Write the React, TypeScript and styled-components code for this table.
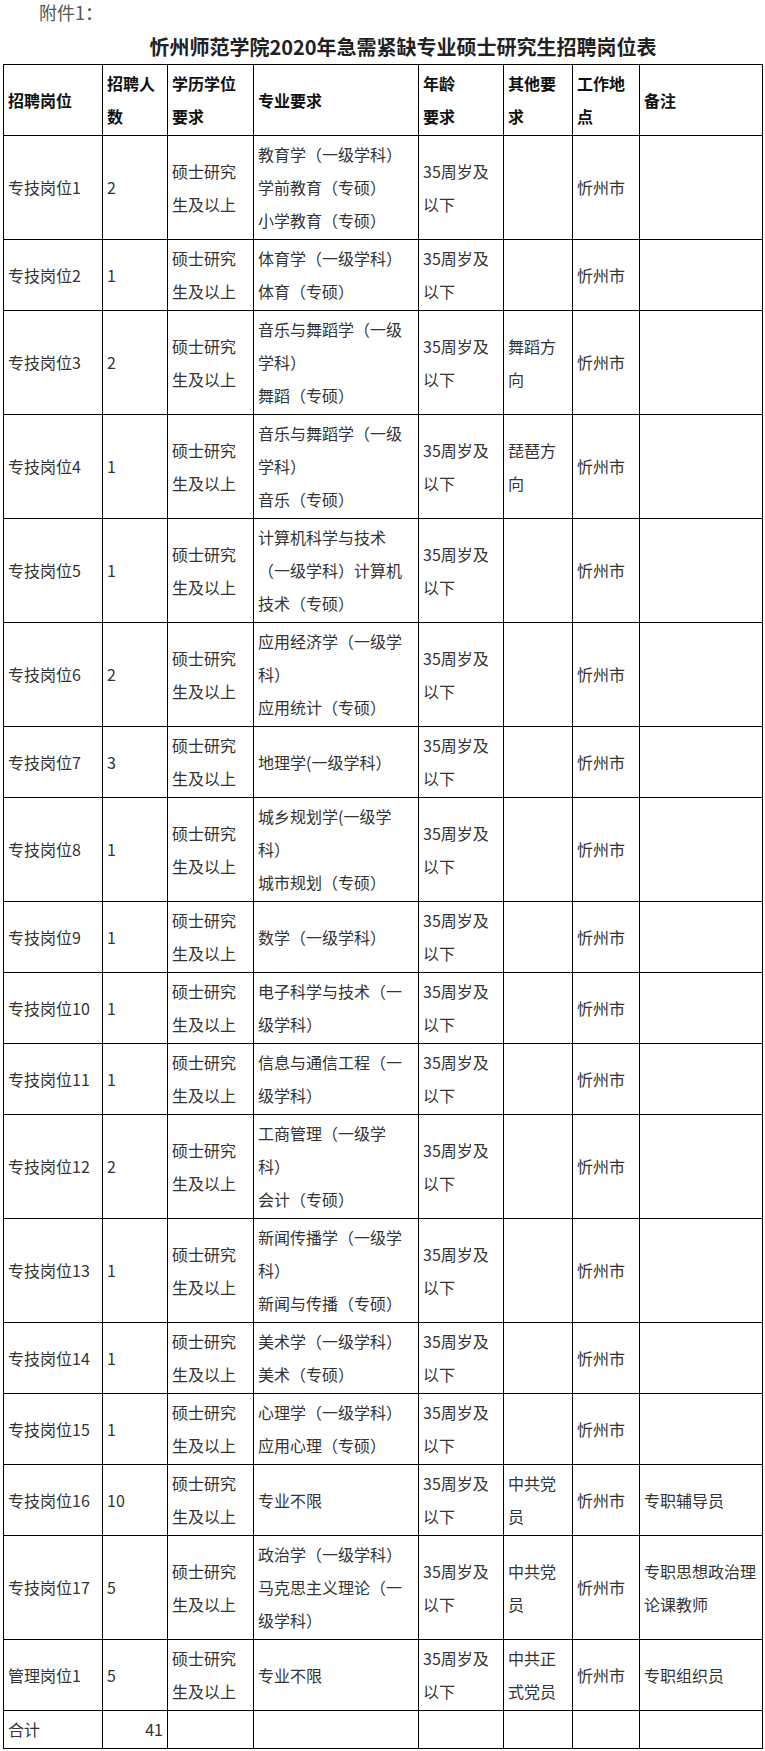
import React from 'react';
import styled, { createGlobalStyle } from 'styled-components';

const GlobalStyle = createGlobalStyle`
    body {
        margin: 0;
        background: #fff;
        font-family: "Noto Sans CJK SC", "Microsoft YaHei", "Liberation Sans", sans-serif;
        text-spacing-trim: space-all;
    }
`;

const Page = styled.div`
    width: 765px;
    box-sizing: border-box;
    padding: 0 2px 0 3px;
`;

const Annex = styled.p`
    margin: 0;
    font-size: 18px;
    line-height: 24px;
    color: #555;
    text-indent: 2em;
`;

const Title = styled.h1`
    margin: 8px 0 2px;
    font-size: 20px;
    line-height: 30px;
    font-weight: bold;
    color: #222;
    text-align: center;
    text-indent: 2em;
`;

const Table = styled.table`
    width: 760px;
    table-layout: fixed;
    border-collapse: collapse;
`;

const HeadCell = styled.th`
    border: 1px solid #000;
    padding: 2px 4px;
    vertical-align: middle;
    text-align: left;
    font-size: 16px;
    line-height: 33px;
    font-weight: bold;
    color: #111;
`;

const Cell = styled.td<{ $align?: 'left' | 'right' }>`
    border: 1px solid #000;
    padding: 2px 4px;
    vertical-align: middle;
    text-align: ${p => p.$align || 'left'};
    font-size: 16px;
    line-height: 33px;
    color: #333;
`;

const Line = styled.div`
    display: block;
`;

// column widths measured from the screenshot
const widths = [99, 65, 86, 165, 85, 69, 67, 123];
// the age heading is broken by hand in the source table
const headings: string[][] = [
    ['招聘岗位'], ['招聘人数'], ['学历学位要求'], ['专业要求'],
    ['年龄', '要求'], ['其他要求'], ['工作地点'], ['备注'],
];

interface Post {
    name: string;
    count: number;
    majors: string[];
    other?: string;
    note?: string;
}

const EDU = '硕士研究生及以上';
const AGE = '35周岁及以下';
const PLACE = '忻州市';

const posts: Post[] = [
    { name: '专技岗位1', count: 2, majors: ['教育学（一级学科）', '学前教育（专硕）', '小学教育（专硕）'] },
    { name: '专技岗位2', count: 1, majors: ['体育学（一级学科）', '体育（专硕）'] },
    { name: '专技岗位3', count: 2, majors: ['音乐与舞蹈学（一级学科）', '舞蹈（专硕）'], other: '舞蹈方向' },
    { name: '专技岗位4', count: 1, majors: ['音乐与舞蹈学（一级学科）', '音乐（专硕）'], other: '琵琶方向' },
    { name: '专技岗位5', count: 1, majors: ['计算机科学与技术（一级学科）计算机技术（专硕）'] },
    { name: '专技岗位6', count: 2, majors: ['应用经济学（一级学科）', '应用统计（专硕）'] },
    { name: '专技岗位7', count: 3, majors: ['地理学(一级学科）'] },
    { name: '专技岗位8', count: 1, majors: ['城乡规划学(一级学科）', '城市规划（专硕）'] },
    { name: '专技岗位9', count: 1, majors: ['数学（一级学科）'] },
    { name: '专技岗位10', count: 1, majors: ['电子科学与技术（一级学科）'] },
    { name: '专技岗位11', count: 1, majors: ['信息与通信工程（一级学科）'] },
    { name: '专技岗位12', count: 2, majors: ['工商管理（一级学科）', '会计（专硕）'] },
    { name: '专技岗位13', count: 1, majors: ['新闻传播学（一级学科）', '新闻与传播（专硕）'] },
    { name: '专技岗位14', count: 1, majors: ['美术学（一级学科）', '美术（专硕）'] },
    { name: '专技岗位15', count: 1, majors: ['心理学（一级学科）', '应用心理（专硕）'] },
    { name: '专技岗位16', count: 10, majors: ['专业不限'], other: '中共党员', note: '专职辅导员' },
    { name: '专技岗位17', count: 5, majors: ['政治学（一级学科）', '马克思主义理论（一级学科）'], other: '中共党员', note: '专职思想政治理论课教师' },
    { name: '管理岗位1', count: 5, majors: ['专业不限'], other: '中共正式党员', note: '专职组织员' },
];

const App: React.FC = () => {
    const total = posts.reduce((sum, p) => sum + p.count, 0);

    return (
        <Page>
            <GlobalStyle />
            <Annex>附件1：</Annex>
            <Title>忻州师范学院2020年急需紧缺专业硕士研究生招聘岗位表</Title>
            <Table>
                <colgroup>
                    {widths.map((w, i) => <col key={i} style={{ width: w }} />)}
                </colgroup>
                <thead>
                    <tr>
                        {headings.map(h => (
                            <HeadCell key={h.join('')}>
                                {h.map(l => <Line key={l}>{l}</Line>)}
                            </HeadCell>
                        ))}
                    </tr>
                </thead>
                <tbody>
                    {posts.map(p => (
                        <tr key={p.name}>
                            <Cell>{p.name}</Cell>
                            <Cell>{p.count}</Cell>
                            <Cell>{EDU}</Cell>
                            <Cell>
                                {p.majors.map(m => <Line key={m}>{m}</Line>)}
                            </Cell>
                            <Cell>{AGE}</Cell>
                            <Cell>{p.other}</Cell>
                            <Cell>{PLACE}</Cell>
                            <Cell>{p.note}</Cell>
                        </tr>
                    ))}
                    <tr>
                        <Cell>合计</Cell>
                        <Cell $align="right">{total}</Cell>
                        <Cell />
                        <Cell />
                        <Cell />
                        <Cell />
                        <Cell />
                        <Cell />
                    </tr>
                </tbody>
            </Table>
        </Page>
    );
};

export default App;
